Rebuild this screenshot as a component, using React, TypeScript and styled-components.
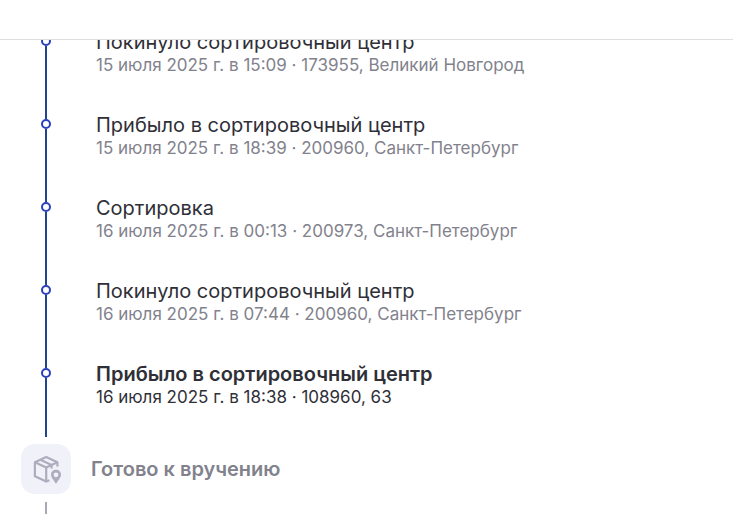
import React from "react";
import styled, { createGlobalStyle } from "styled-components";

const GlobalStyle = createGlobalStyle`
  * { box-sizing: border-box; }
  body {
    margin: 0;
    background: #fff;
    color: #2f2f37;
    font-family: Inter, "Liberation Sans", sans-serif;
  }
`;

const Page = styled.div`
  height: 100vh;
  display: flex;
  flex-direction: column;
  overflow: hidden;
`;

const Header = styled.header`
  flex: none;
  height: 40px;
  border-bottom: 1px solid #dededf;
  background: #fff;
  z-index: 1;
`;

const Content = styled.main`
  flex: 1;
  min-height: 0;
  padding: 0 21px;
  margin-top: -12px;
`;

const Events = styled.ol`
  list-style: none;
  margin: 0;
  padding: 0;
`;

const Event = styled.li`
  display: grid;
  grid-template-columns: 50px 1fr;
  column-gap: 25px;
`;

const Rail = styled.div`
  display: flex;
  flex-direction: column;
  align-items: center;
`;

const Line = styled.span<{ $length?: number; $pending?: boolean }>`
  width: 2px;
  flex: ${(p) => (p.$length ? `0 0 ${p.$length}px` : "1")};
  background: ${(p) => (p.$pending ? "#a9a8b8" : "#24438f")};
`;

const Dot = styled.span`
  flex: none;
  width: 10px;
  height: 10px;
  border: 2px solid #2a40bb;
  border-radius: 50%;
  background: #fff;
`;

const EventBody = styled.div<{ $last: boolean }>`
  padding-top: 2px;
  padding-bottom: ${(p) => (p.$last ? 29 : 35)}px;
`;

const EventTitle = styled.h3<{ $current: boolean }>`
  margin: 0;
  font-size: 20px;
  line-height: 24px;
  font-weight: ${(p) => (p.$current ? 600 : 400)};
`;

const EventDetail = styled.p<{ $current: boolean }>`
  margin: 0;
  font-size: 17px;
  line-height: 22px;
  color: ${(p) => (p.$current ? "#2f2f37" : "#82828d")};
`;

const Stage = styled.section`
  display: flex;
  align-items: center;
  gap: 20px;
  margin: 7px 0 8px;
`;

const StageIcon = styled.div`
  display: flex;
  align-items: center;
  justify-content: center;
  width: 50px;
  height: 50px;
  border-radius: 14px;
  background: #f1f1fa;
`;

const StageTitle = styled.h2`
  margin: 0;
  font-size: 20px;
  line-height: 24px;
  font-weight: 600;
  color: #82828d;
`;

const NextRail = styled(Rail)`
  width: 50px;
`;

const events = [
  { title: "Покинуло сортировочный центр", detail: "15 июля 2025 г. в 15:09 · 173955, Великий Новгород" },
  { title: "Прибыло в сортировочный центр", detail: "15 июля 2025 г. в 18:39 · 200960, Санкт-Петербург" },
  { title: "Сортировка", detail: "16 июля 2025 г. в 00:13 · 200973, Санкт-Петербург" },
  { title: "Покинуло сортировочный центр", detail: "16 июля 2025 г. в 07:44 · 200960, Санкт-Петербург" },
  { title: "Прибыло в сортировочный центр", detail: "16 июля 2025 г. в 18:38 · 108960, 63" },
];

function PackageIcon() {
  return (
    <svg width="32" height="32" viewBox="0 0 32 32" fill="none" stroke="#adadbd" strokeWidth="2.2" strokeLinejoin="round" aria-hidden="true">
      <path d="M19.4 27.2 L16.2 28.6 L4.9 23.2 V9.2 L16.2 4 L27.4 9.2 V13.6" />
      <path d="M4.9 9.2 L16.2 14.4 L27.4 9.2 M16.2 14.4 V28.6 M10.4 6.7 L21.6 11.9 V15.6" />
      <path fillRule="evenodd" stroke="none" fill="#adadbd" d="M26 16.8 C23.1 16.8 21 18.9 21 21.7 C21 25.2 24.2 27 25 29.6 Q26 31.6 27 29.6 C27.8 27 31 25.2 31 21.7 C31 18.9 28.9 16.8 26 16.8 Z M26 19.4 A2.4 2.4 0 1 1 26 24.2 A2.4 2.4 0 1 1 26 19.4 Z" />
    </svg>
  );
}

export default function App() {
  return (
    <Page>
      <GlobalStyle />
      <Header />
      <Content>
        <Events>
          {events.map((event, index) => {
            const current = index === events.length - 1;
            return (
              <Event key={event.detail}>
                <Rail>
                  <Line $length={8} />
                  <Dot />
                  <Line />
                </Rail>
                <EventBody $last={current}>
                  <EventTitle $current={current}>{event.title}</EventTitle>
                  <EventDetail $current={current}>{event.detail}</EventDetail>
                </EventBody>
              </Event>
            );
          })}
        </Events>
        <Stage>
          <StageIcon>
            <PackageIcon />
          </StageIcon>
          <StageTitle>Готово к вручению</StageTitle>
        </Stage>
        <NextRail>
          <Line $length={40} $pending />
        </NextRail>
      </Content>
    </Page>
  );
}
